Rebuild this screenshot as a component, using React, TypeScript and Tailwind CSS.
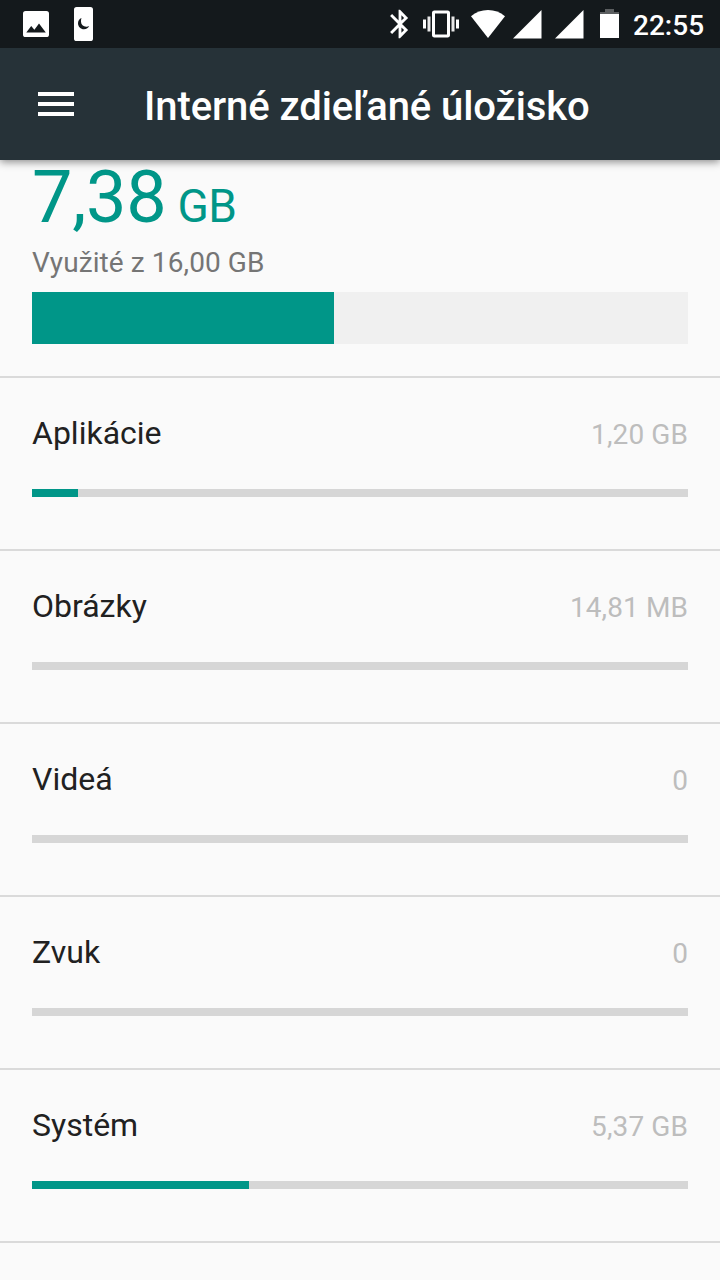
const categories = [
  { name: "Aplikácie", size: "1,20 GB", width: 46 },
  { name: "Obrázky", size: "14,81 MB", width: 0 },
  { name: "Videá", size: "0", width: 0 },
  { name: "Zvuk", size: "0", width: 0 },
  { name: "Systém", size: "5,37 GB", width: 217 },
];

function StatusBar() {
  return (
    <div className="h-12 bg-[#14191c] flex justify-between text-white">
      <div className="flex pl-[23px]">
        {/* screenshot notification */}
        <svg className="w-[26px] h-[26px] mt-[11px]" viewBox="0 0 26 26" fill="currentColor">
          <rect width="26" height="26" rx="2.6" />
          <path fill="#14191c" d="M3.3 21.500l4.900-6.500 3.200 3.700 4.600-6.200 6.800 9z" />
        </svg>
        {/* night mode */}
        <svg className="w-[19px] h-[34px] ml-[25px] mt-[7px]" viewBox="0 0 19 34" fill="currentColor">
          <rect width="19" height="34" rx="2.6" />
          <path fill="#14191c" d="M7.500 11C5.400 11.900 4 13.900 4 16.200c0 3.400 2.700 6 6 6 2.400 0 4.500-1.200 5.200-3.100-1 .5-2 .7-3.100.6-2.900-.2-5-2.300-5.100-5-.1-1.400.1-2.700.5-3.700z" />
        </svg>
      </div>
      <div className="flex pr-4">
        <svg className="w-[34px] h-[34px] mt-[7px]" viewBox="0 0 24 24" fill="currentColor">
          <path d="M17.710 7.710L12 2h-1v7.590L6.410 5 5 6.410 10.590 12 5 17.590 6.410 19 11 14.410V22h1l5.710-5.710-4.300-4.290 4.300-4.290zM13 5.830l1.880 1.880L13 9.590V5.830zm1.880 10.460L13 18.170v-3.760l1.880 1.880z" />
        </svg>
        <svg className="w-9 h-9 ml-[6px] mt-[6px]" viewBox="0 0 24 24" fill="currentColor">
          <path opacity=".9" d="M3 17h2V7H3v10zM19 17h2V7h-2v10z" />
          <path d="M0 15h2V9H0v6zM22 9v6h2V9h-2zM16.500 3h-9C6.670 3 6 3.670 6 4.500v15c0 .83.67 1.500 1.500 1.500h9c.83 0 1.500-.67 1.500-1.500v-15c0-.83-.67-1.500-1.500-1.500zM16 19H8V5h8v14z" />
        </svg>
        <svg className="w-[34px] h-[28px] ml-3 mt-[10px]" viewBox="0 0 34 28" fill="currentColor">
          <path d="M17 28L0 6.300C4.800 2.200 10.600 0 17 0s12.200 2.200 17 6.300z" />
        </svg>
        <svg className="w-[29px] h-[29px] ml-2 mt-[10px]" viewBox="0 0 29 29" fill="currentColor">
          <path d="M0 28.500L28.500 0v28.500z" />
        </svg>
        <svg className="w-[29px] h-[29px] ml-[13px] mt-[10px]" viewBox="0 0 29 29" fill="currentColor">
          <path d="M0 28.500L28.500 0v28.500z" />
        </svg>
        <svg className="w-[19px] h-[29px] ml-4 mt-[9px]" viewBox="0 0 19 29">
          <path fill="#5b5e60" d="M5 0h9v3h5v2H0V3h5z" />
          <path fill="#fff" d="M0 5h19v24H0z" />
        </svg>
        <span className="w-[71px] ml-[14px] mt-[10px] text-[28px] leading-8 font-medium whitespace-nowrap">22:55</span>
      </div>
    </div>
  );
}

export default function App() {
  return (
    <div className="w-[720px] h-[1280px] overflow-hidden bg-[#fafafa] font-['Roboto','Noto_Sans',sans-serif]">
      <header className="relative z-10 shadow-[0_2px_8px_rgba(0,0,0,0.45)]">
        <StatusBar />
        <div className="h-28 bg-[#263238] flex">
          <svg className="w-9 h-6 ml-[38px] mt-11" viewBox="0 0 36 24" fill="#fff">
            <path d="M0 0h36v4H0zM0 10h36v4H0zM0 20h36v4H0z" />
          </svg>
          <h1 className="ml-[70px] mt-[35px] text-[40px] leading-[48px] tracking-[-0.08px] font-medium text-white whitespace-nowrap">
            Interné zdieľané úložisko
          </h1>
        </div>
      </header>

      <section className="h-[218px] px-8 pt-px border-b-2 border-[#dadada]">
        <div className="h-[86px] text-[#009688] text-[72px] leading-[73px] tracking-[-0.3px] whitespace-nowrap">
          7,38<span className="text-[46px] leading-none tracking-[-0.4px]"> GB</span>
        </div>
        <div className="text-[28px] leading-8 tracking-[0.1px] text-[#757575]">Využité z 16,00 GB</div>
        <div className="mt-[13px] h-[52px] bg-[#f0f0f0]">
          <div className="h-full w-[302px] bg-[#009688]" />
        </div>
      </section>

      {categories.map((c) => (
        <section key={c.name} className="h-[173px] px-8 pt-[35px] border-b-2 border-[#dadada]">
          <div className="h-10 flex items-baseline justify-between">
            <span className="text-[32px] leading-10 text-[#212121]">{c.name}</span>
            <span className="text-[28px] leading-8 tracking-[0.1px] text-[#bdbdbd]">{c.size}</span>
          </div>
          <div className="mt-9 h-2 bg-[#d6d6d6]">
            <div className="h-full bg-[#009688]" style={{ width: c.width }} />
          </div>
        </section>
      ))}
    </div>
  );
}
